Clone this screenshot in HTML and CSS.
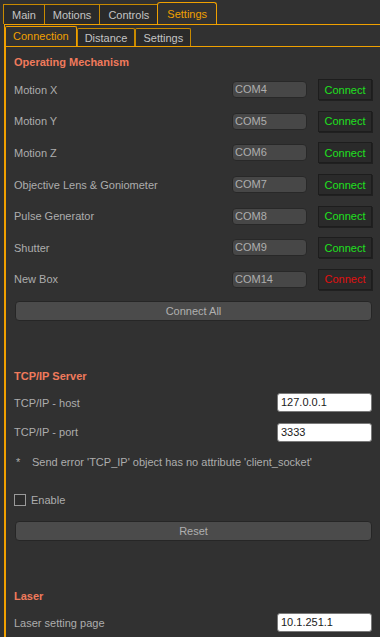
FILE: index.html
```html
<!DOCTYPE html>
<html lang="en">
<head>
    <meta charset="UTF-8">
    <meta name="viewport" content="width=device-width, initial-scale=1.0">
    <title>Settings</title>
    <link rel="stylesheet" href="styles.css">
</head>
<body>
    <div class="tabs">
        <div class="tab">Main</div>
        <div class="tab">Motions</div>
        <div class="tab">Controls</div>
        <div class="tab active">Settings</div>
    </div>

    <div class="pane">
        <div class="subtabs">
            <div class="subtab active">Connection</div>
            <div class="subtab">Distance</div>
            <div class="subtab">Settings</div>
        </div>

        <div class="subpane">
            <h2 class="section-title">Operating Mechanism</h2>
            <div class="device-list">
                <div class="row">
                    <span class="label">Motion X</span>
                    <span class="port">COM4</span>
                    <button class="connect-btn ok">Connect</button>
                </div>
                <div class="row">
                    <span class="label">Motion Y</span>
                    <span class="port">COM5</span>
                    <button class="connect-btn ok">Connect</button>
                </div>
                <div class="row">
                    <span class="label">Motion Z</span>
                    <span class="port">COM6</span>
                    <button class="connect-btn ok">Connect</button>
                </div>
                <div class="row">
                    <span class="label">Objective Lens &amp; Goniometer</span>
                    <span class="port">COM7</span>
                    <button class="connect-btn ok">Connect</button>
                </div>
                <div class="row">
                    <span class="label">Pulse Generator</span>
                    <span class="port">COM8</span>
                    <button class="connect-btn ok">Connect</button>
                </div>
                <div class="row">
                    <span class="label">Shutter</span>
                    <span class="port">COM9</span>
                    <button class="connect-btn ok">Connect</button>
                </div>
                <div class="row">
                    <span class="label">New Box</span>
                    <span class="port">COM14</span>
                    <button class="connect-btn fail">Connect</button>
                </div>
            </div>
            <button class="wide-btn connect-all">Connect All</button>

            <h2 class="section-title tcp-title">TCP/IP Server</h2>
            <div class="field-row">
                <span class="label">TCP/IP - host</span>
                <span class="text-input">127.0.0.1</span>
            </div>
            <div class="field-row">
                <span class="label">TCP/IP - port</span>
                <span class="text-input">3333</span>
            </div>
            <div class="error-line">
                <span class="star">*</span>
                <span>Send error 'TCP_IP' object has no attribute 'client_socket'</span>
            </div>
            <label class="check-row">
                <span class="checkbox"></span>
                <span>Enable</span>
            </label>
            <button class="wide-btn reset">Reset</button>

            <h2 class="section-title laser-title">Laser</h2>
            <div class="field-row">
                <span class="label">Laser setting page</span>
                <span class="text-input">10.1.251.1</span>
            </div>
        </div>
    </div>
</body>
</html>
```

FILE: styles.css
```css
body {
    margin: 0;
    padding: 0;
    background-color: #313131;
    font-family: "Liberation Sans", Arial, sans-serif;
    font-size: 11px;
    color: #adadad;
    overflow: hidden;
}
.tabs {
    display: flex;
    align-items: flex-end;
    height: 24px;
    padding-left: 3px;
}
.tab {
    height: 19px;
    line-height: 20px;
    padding: 0 8px;
    background-color: #2a2a2a;
    border: 1px solid #c88a00;
    border-bottom: none;
    color: #c4c4c4;
    font-size: 11px;
}
.tab + .tab {
    border-left: none;
}
.tab.active {
    height: 21px;
    line-height: 22px;
    padding: 0 9px;
    background-color: #313131;
    border: 1px solid #f0a000;
    border-bottom: none;
    border-radius: 3px 3px 0 0;
    color: #f0a000;
    margin-left: -1px;
}
.pane {
    border-top: 1px solid #f0a000;
    border-left: 1px solid #f0a000;
    margin-left: 4px;
}
.subtabs {
    display: flex;
    align-items: flex-end;
    height: 21px;
}
.subtab {
    height: 17px;
    line-height: 18px;
    padding: 0 7px;
    background-color: #2a2a2a;
    border: 1px solid #c88a00;
    border-bottom: none;
    border-radius: 2px 2px 0 0;
    color: #c4c4c4;
}
.subtab.active {
    height: 19px;
    line-height: 19px;
    padding: 0 7px;
    background-color: #313131;
    border-color: #f0a000;
    color: #f0a000;
}
.subpane {
    border-top: 1px solid #f0a000;
    border-left: 1px solid #f0a000;
    padding: 8px 8px 0 8px;
}
.section-title {
    margin: 0;
    font-size: 11px;
    line-height: 14px;
    font-weight: bold;
    color: #f07a5c;
}
.device-list {
    margin-top: 5px;
}
.row {
    display: flex;
    align-items: center;
    height: 31.6px;
}
.label {
    flex: 1;
}
.port {
    box-sizing: border-box;
    width: 75px;
    height: 17px;
    line-height: 15px;
    padding-left: 2px;
    background-color: #474747;
    border: 1px solid #282828;
    border-radius: 4px;
    color: #aeaeae;
}
.connect-btn {
    box-sizing: border-box;
    width: 54px;
    height: 21px;
    margin-left: 11px;
    padding: 0;
    background-color: #2a2a2a;
    border: 1px solid #1d1d1d;
    box-shadow: 1px 1px 0 #202020;
    font-family: inherit;
    font-size: 11px;
}
.connect-btn.ok {
    color: #1fe01f;
}
.connect-btn.fail {
    color: #e01010;
}
.wide-btn {
    display: block;
    box-sizing: border-box;
    width: 357px;
    height: 20px;
    margin-left: 1px;
    padding: 0;
    background-color: #4b4b4b;
    border: 1px solid #262626;
    border-radius: 4px;
    color: #b0b0b0;
    font-family: inherit;
    font-size: 11px;
}
.connect-all {
    margin-top: 6px;
}
.tcp-title {
    margin-top: 48px;
}
.field-row {
    display: flex;
    align-items: center;
    height: 29.5px;
}
.tcp-title + .field-row,
.laser-title + .field-row {
    margin-top: 5px;
}
.text-input {
    box-sizing: border-box;
    width: 95px;
    height: 19px;
    line-height: 17px;
    padding-left: 3px;
    background-color: #ffffff;
    border: 1px solid #7a7a7a;
    border-radius: 3px;
    color: #1a1a1a;
}
.error-line {
    display: flex;
    margin-top: 8px;
    line-height: 14px;
}
.star {
    width: 16px;
    padding-left: 2px;
}
.check-row {
    display: flex;
    align-items: center;
    margin-top: 24px;
    height: 14px;
}
.checkbox {
    box-sizing: border-box;
    width: 12px;
    height: 12px;
    margin-right: 5px;
    border: 1px solid #9a9a9a;
    background-color: #2c2c2c;
}
.reset {
    margin-top: 14px;
}
.laser-title {
    margin-top: 48px;
}
```
